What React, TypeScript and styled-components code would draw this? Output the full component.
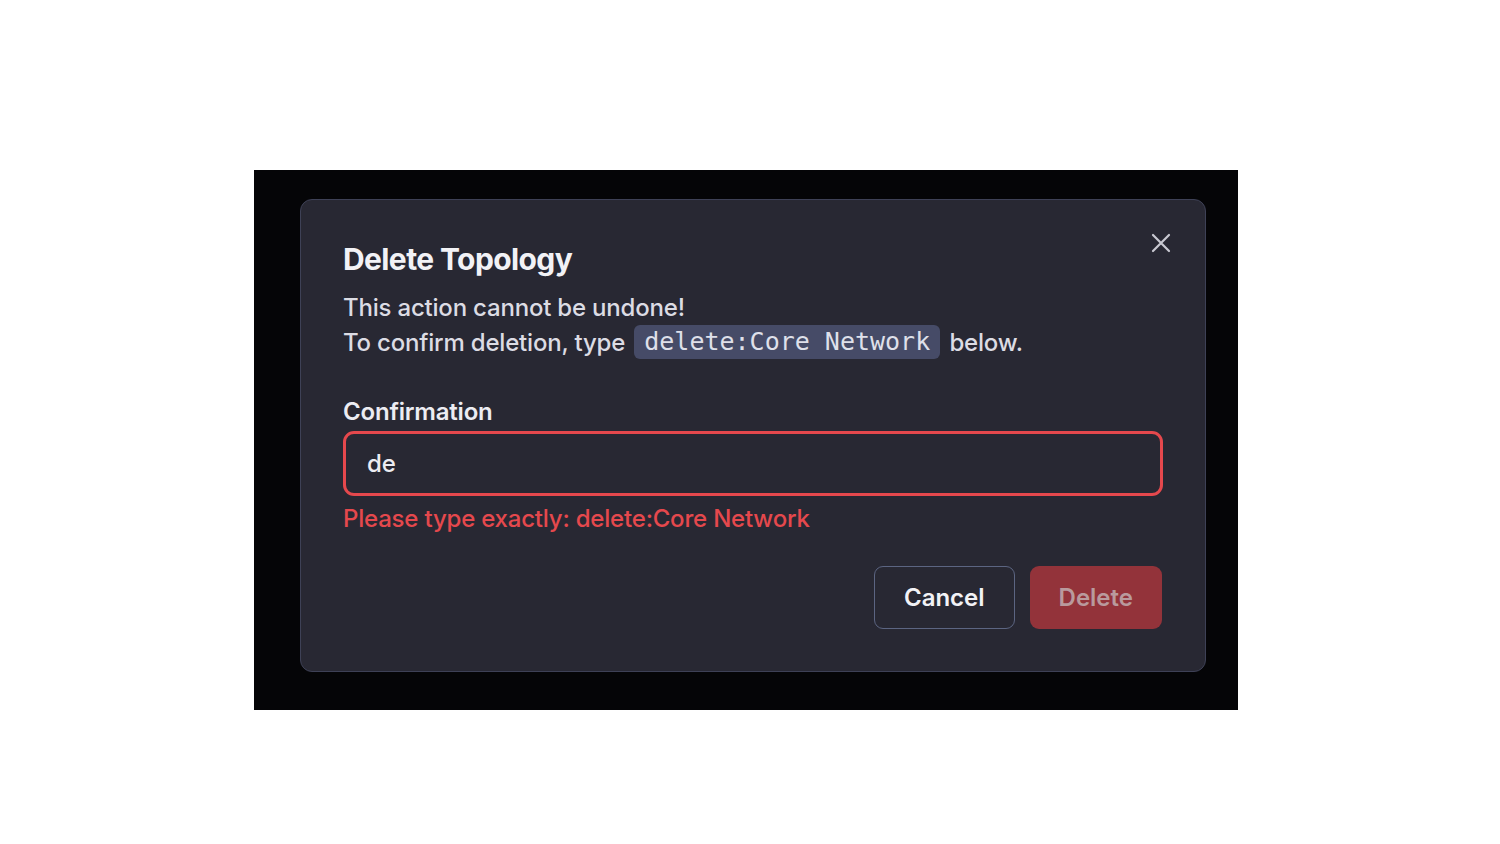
import styled, { createGlobalStyle } from "styled-components";

const GlobalStyle = createGlobalStyle`
  body {
    margin: 0;
    background: #ffffff;
    font-family: Inter, "Noto Sans", sans-serif;
  }
`;

export default function App(): JSX.Element {
  return (
    <>
      <GlobalStyle />
      <Backdrop>
        <Dialog>
          <CloseButton type="button" aria-label="Close">
            <svg width="20" height="20" viewBox="0 0 20 20" fill="none">
              <path
                d="M2 2L18 18M18 2L2 18"
                stroke="#c9c9d2"
                strokeWidth="2.2"
                strokeLinecap="round"
              />
            </svg>
          </CloseButton>
          <Title>Delete Topology</Title>
          <Message>
            This action cannot be undone!
            <br />
            To confirm deletion, type <Code>delete:Core Network</Code> below.
          </Message>
          <Field>
            <Label htmlFor="confirm">Confirmation</Label>
            <Input id="confirm" defaultValue="de" $invalid />
            <ErrorText>Please type exactly: delete:Core Network</ErrorText>
          </Field>
          <Actions>
            <Button type="button">Cancel</Button>
            <Button type="button" $danger disabled>
              Delete
            </Button>
          </Actions>
        </Dialog>
      </Backdrop>
    </>
  );
}

const Backdrop = styled.div`
  box-sizing: border-box;
  margin: 170px 0 0 254px;
  width: 984px;
  height: 540px;
  background: #050507;
  padding: 29px 32px 38px 46px;
`;

const Dialog = styled.section`
  position: relative;
  box-sizing: border-box;
  height: 473px;
  background: #282833;
  border: 1.5px solid #3e4156;
  border-radius: 12px;
  padding: 41px 42px 42px 42px;
  display: flex;
  flex-direction: column;
  color: #e6e6ec;
`;

const CloseButton = styled.button`
  position: absolute;
  top: 32px;
  right: 33px;
  width: 22px;
  height: 22px;
  padding: 0;
  border: none;
  background: transparent;
  display: flex;
  align-items: center;
  justify-content: center;
  cursor: pointer;
`;

const Title = styled.h2`
  margin: 0;
  font-size: 30px;
  line-height: 36px;
  font-weight: 700;
  letter-spacing: -0.6px;
  color: #f2f2f6;
`;

const Message = styled.p`
  margin: 13px 0 0;
  font-size: 24px;
  line-height: 35px;
  font-weight: 500;
  letter-spacing: -0.2px;
  color: #dcdce4;
`;

const Code = styled.code`
  display: inline-block;
  font-family: "DejaVu Sans Mono", "Liberation Mono", monospace;
  font-size: 25px;
  line-height: 34px;
  padding: 0 10px;
  margin: 0 3px;
  border-radius: 6px;
  background: #464b67;
  color: #dfe0ea;
  vertical-align: top;
  letter-spacing: 0;
`;

const Field = styled.div`
  margin-top: 37px;
  display: flex;
  flex-direction: column;
`;

const Label = styled.label`
  font-size: 24px;
  line-height: 30px;
  font-weight: 600;
  letter-spacing: -0.2px;
  color: #ececf2;
  margin-bottom: 4px;
`;

const Input = styled.input<{ $invalid?: boolean }>`
  box-sizing: border-box;
  height: 65px;
  width: 100%;
  padding: 0 21px;
  background: transparent;
  border: 3px solid ${({ $invalid }) => ($invalid ? "#e5484d" : "#4a4f6a")};
  border-radius: 11px;
  font-family: Inter, "Noto Sans", sans-serif;
  font-size: 24px;
  font-weight: 500;
  color: #ececf2;
  outline: none;
`;

const ErrorText = styled.div`
  margin-top: 8px;
  font-size: 24px;
  line-height: 30px;
  font-weight: 500;
  letter-spacing: -0.2px;
  color: #e5484d;
`;

const Actions = styled.div`
  margin-top: auto;
  display: flex;
  justify-content: flex-end;
  gap: 15px;
  padding-right: 1px;
`;

const Button = styled.button<{ $danger?: boolean }>`
  box-sizing: border-box;
  height: 63px;
  padding: 0 29px;
  border-radius: 9px;
  font-family: Inter, "Noto Sans", sans-serif;
  font-size: 24px;
  font-weight: 600;
  border: ${({ $danger }) => ($danger ? "none" : "1.5px solid #5c6582")};
  background: ${({ $danger }) => ($danger ? "#93333a" : "transparent")};
  color: ${({ $danger }) => ($danger ? "#b99a9d" : "#f2f2f6")};
  cursor: pointer;

  &:disabled {
    cursor: not-allowed;
  }
`;
